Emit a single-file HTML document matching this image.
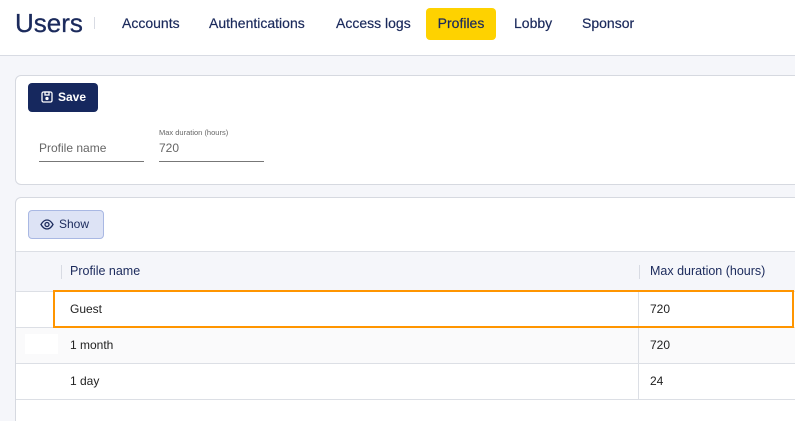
<!DOCTYPE html>
<html><head><meta charset="utf-8"><style>
*{box-sizing:border-box;margin:0;padding:0}
html,body{width:795px;height:421px;overflow:hidden}
body{background:#f5f6fa;font-family:"Liberation Sans",sans-serif;position:relative;color:#1b2a5c}
.hdr{position:absolute;left:0;top:0;width:795px;height:56px;background:#fff;border-bottom:1px solid #d8dbe3}
.t{position:absolute;top:8px;left:15px;font-size:26px;color:#1b2a5c;-webkit-text-stroke:0.3px #1b2a5c}
.sep{position:absolute;left:94px;top:17px;width:1px;height:12px;background:#d8dbe3}
.nav{position:absolute;top:15px;font-size:14px;color:#1b2a5c;-webkit-text-stroke:0.2px #1b2a5c}
.prof{position:absolute;left:426px;top:8px;width:70px;height:32px;background:#fed200;border-radius:4px;font-size:14px;text-align:center;line-height:31px;-webkit-text-stroke:0.2px #1b2a5c}
.card{position:absolute;left:15px;width:800px;background:#fff;border:1px solid #d6d9e0;border-radius:6px}
.save{position:absolute;left:12px;top:7px;width:70px;height:29px;background:#16285e;border-radius:4px;color:#fff;font-size:12px;font-weight:bold;line-height:29px;padding-left:30px}
.inp{position:absolute;border-bottom:1px solid #777;font-size:12px;color:#666;height:25px;line-height:22px}
.show{position:absolute;left:12px;top:12px;width:76px;height:29px;background:#dde3f5;border:1px solid #a9b8e3;border-radius:4px;font-size:12px;color:#1b2a5c;line-height:27px;padding-left:30px}
.row{position:absolute;left:0;width:800px;border-top:1px solid #dcdfe5;font-size:12px;color:#222}
.row span{position:absolute;top:10px}
</style></head><body>
<div class="hdr">
<div class="t">Users</div><div class="sep"></div>
<div class="nav" style="left:122px">Accounts</div>
<div class="nav" style="left:209px">Authentications</div>
<div class="nav" style="left:336px">Access logs</div>
<div class="prof">Profiles</div>
<div class="nav" style="left:514px">Lobby</div>
<div class="nav" style="left:582px">Sponsor</div>
</div>
<div class="card" style="top:75px;height:110px">
<div class="save"><svg style="position:absolute;left:13px;top:8px" width="12" height="12" viewBox="0 0 12 12" fill="none" stroke="#fff" stroke-width="1.3"><rect x="1" y="1" width="10" height="10" rx="1.5"/><rect x="4" y="1" width="4" height="3"/><circle cx="6" cy="7.5" r="1" fill="#fff"/></svg>Save</div>
<div style="position:absolute;left:143px;top:52px;font-size:7.5px;color:#666">Max duration (hours)</div>
<div class="inp" style="left:23px;top:61px;width:105px">Profile name</div>
<div class="inp" style="left:143px;top:61px;width:105px">720</div>
</div>
<div class="card" style="top:197px;height:240px">
<div class="show"><svg style="position:absolute;left:11px;top:8px" width="14" height="11" viewBox="0 0 14 11" fill="none" stroke="#1b2a5c" stroke-width="1.3"><path d="M1 5.5C3 2 5 1 7 1s4 1 6 4.5C11 9 9 10 7 10S3 9 1 5.5z"/><circle cx="7" cy="5.5" r="2"/></svg>Show</div>
<div class="row" style="top:53px;height:40px;background:#f5f6fa;color:#1b2a5c">
<div style="position:absolute;left:45px;top:13px;width:1px;height:14px;background:#d8dbe3"></div>
<span style="left:54px;top:12px;font-size:12.5px">Profile name</span>
<div style="position:absolute;left:623px;top:13px;width:1px;height:14px;background:#d8dbe3"></div>
<span style="left:634px;top:12px;font-size:12.5px">Max duration (hours)</span></div>
<div class="row" style="top:93px;height:36px;background:#fff"><span style="left:54px">Guest</span><span style="left:634px">720</span></div>
<div class="row" style="top:129px;height:36px;background:#fafafb"><div style="position:absolute;left:9px;top:6px;width:33px;height:20px;background:#fff"></div><span style="left:54px">1 month</span><span style="left:634px">720</span></div>
<div class="row" style="top:165px;height:36px;background:#fff"><span style="left:54px">1 day</span><span style="left:634px">24</span></div>
<div class="row" style="top:201px;height:40px;background:#fff"></div>
<div style="position:absolute;left:622px;top:93px;width:1px;height:108px;background:#dcdfe5"></div>
</div>
<div style="position:absolute;left:53px;top:290px;width:741px;height:38px;border:2px solid #ff9500"></div>
</body></html>
